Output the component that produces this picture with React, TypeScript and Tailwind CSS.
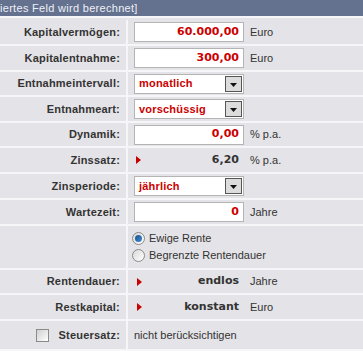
import React from "react";

const LBL = "font-['Liberation_Sans',Arial,sans-serif] font-bold text-[11px] tracking-[0.2px] text-[#333]";
const REG = "font-['Liberation_Sans',Arial,sans-serif] text-[11px] text-[#333]";
const VAL = "font-['DejaVu_Sans',Verdana,sans-serif] font-bold text-[11px]";

function Tri() {
  return (
    <svg width="5" height="8" viewBox="0 0 5 8" className="block">
      <polygon points="0,0 5,4 0,8" fill="#c80000" />
    </svg>
  );
}

function Row({ label, h, children, left }: { label?: string; h: string; children?: React.ReactNode; left?: React.ReactNode }) {
  return (
    <div className={`flex border-b-2 border-[#f6f6f8] ${h}`}>
      <div className="w-[128px] shrink-0 flex items-center justify-end pr-[6px] border-r-2 border-[#f6f6f8]">
        {left}
        {label && <span className={LBL}>{label}</span>}
      </div>
      <div className="flex-1 flex items-center pl-[6px]">{children}</div>
    </div>
  );
}

function Input({ value }: { value: string }) {
  return (
    <div className="w-[110px] h-[20px] bg-white border border-[#b4b4b4] flex items-center justify-end pr-[4px]">
      <span className={`${VAL} text-[#cc0000]`}>{value}</span>
    </div>
  );
}

function Select({ value }: { value: string }) {
  return (
    <div className="w-[110px] h-[20px] bg-white border border-[#b4b4b4] flex items-center justify-between pl-[4px] pr-[1px]">
      <span className={`${LBL} !text-[#cc0000]`}>{value}</span>
      <div className="w-[17px] h-[16px] bg-[#dcdcdc] border border-[#555] flex items-end justify-center pb-[4px]">
        <svg width="7" height="4" viewBox="0 0 7 4" className="block">
          <polygon points="0,0 7,0 3.5,4" fill="#111" />
        </svg>
      </div>
    </div>
  );
}

function Unit({ children }: { children: React.ReactNode }) {
  return <span className={`${REG} ml-[6px]`}>{children}</span>;
}

function Radio({ checked }: { checked?: boolean }) {
  return (
    <div className="w-[13px] h-[13px] rounded-full border border-[#8a8a8a] bg-gradient-to-br from-[#d8d8d8] to-white flex items-center justify-center">
      {checked && <div className="w-[7px] h-[7px] rounded-full bg-gradient-to-br from-[#1a4e8a] to-[#3f8fd6]" />}
    </div>
  );
}

export default function App() {
  return (
    <div className="w-[363px] h-[351px] overflow-hidden bg-[#e4e3e7]">
      <div className="h-[16px] bg-[#64718f] flex items-center overflow-hidden">
        <span className="font-['Liberation_Sans',Arial,sans-serif] text-[11px] tracking-[0.3px] text-[#eef0f5] whitespace-nowrap">iertes Feld wird berechnet]</span>
      </div>
      <div className="h-[2px] bg-[#f6f6f8]" />
      <Row label="Kapitalvermögen:" h="h-[28px] pt-[2px]">
        <Input value="60.000,00" />
        <Unit>Euro</Unit>
      </Row>
      <Row label="Kapitalentnahme:" h="h-[26px]">
        <Input value="300,00" />
        <Unit>Euro</Unit>
      </Row>
      <Row label="Entnahmeintervall:" h="h-[25px]">
        <Select value="monatlich" />
      </Row>
      <Row label="Entnahmeart:" h="h-[26px]">
        <Select value="vorschüssig" />
      </Row>
      <Row label="Dynamik:" h="h-[25px]">
        <Input value="0,00" />
        <Unit>% p.a.</Unit>
      </Row>
      <Row label="Zinssatz:" h="h-[26px]">
        <div className="w-[110px] flex items-center justify-between pl-[2px] pr-[5px]">
          <Tri />
          <span className={`${VAL} text-[#333]`}>6,20</span>
        </div>
        <Unit>% p.a.</Unit>
      </Row>
      <Row label="Zinsperiode:" h="h-[26px]">
        <Select value="jährlich" />
      </Row>
      <Row label="Wartezeit:" h="h-[26px]">
        <Input value="0" />
        <Unit>Jahre</Unit>
      </Row>
      <Row h="h-[44px]">
        <div className="flex flex-col gap-[4px] -ml-[2px]">
          <div className="flex items-center gap-[4px] leading-[13px]">
            <Radio checked />
            <span className={REG}>Ewige Rente</span>
          </div>
          <div className="flex items-center gap-[4px] leading-[13px]">
            <Radio />
            <span className={REG}>Begrenzte Rentendauer</span>
          </div>
        </div>
      </Row>
      <Row label="Rentendauer:" h="h-[25px]">
        <div className="w-[110px] flex items-center justify-between pl-[3px] pr-[5px]">
          <Tri />
          <span className={`${VAL} text-[#333]`}>endlos</span>
        </div>
        <Unit>Jahre</Unit>
      </Row>
      <Row label="Restkapital:" h="h-[26px]">
        <div className="w-[110px] flex items-center justify-between pl-[3px] pr-[5px]">
          <Tri />
          <span className={`${VAL} text-[#333]`}>konstant</span>
        </div>
        <Unit>Euro</Unit>
      </Row>
      <Row
        label="Steuersatz:"
        h="h-[30px]"
        left={
          <div className="w-[13px] h-[13px] border border-[#8a8a8a] bg-gradient-to-br from-[#d0d0d0] to-white mr-[10px]" />
        }
      >
        <span className={REG}>nicht berücksichtigen</span>
      </Row>
    </div>
  );
}
